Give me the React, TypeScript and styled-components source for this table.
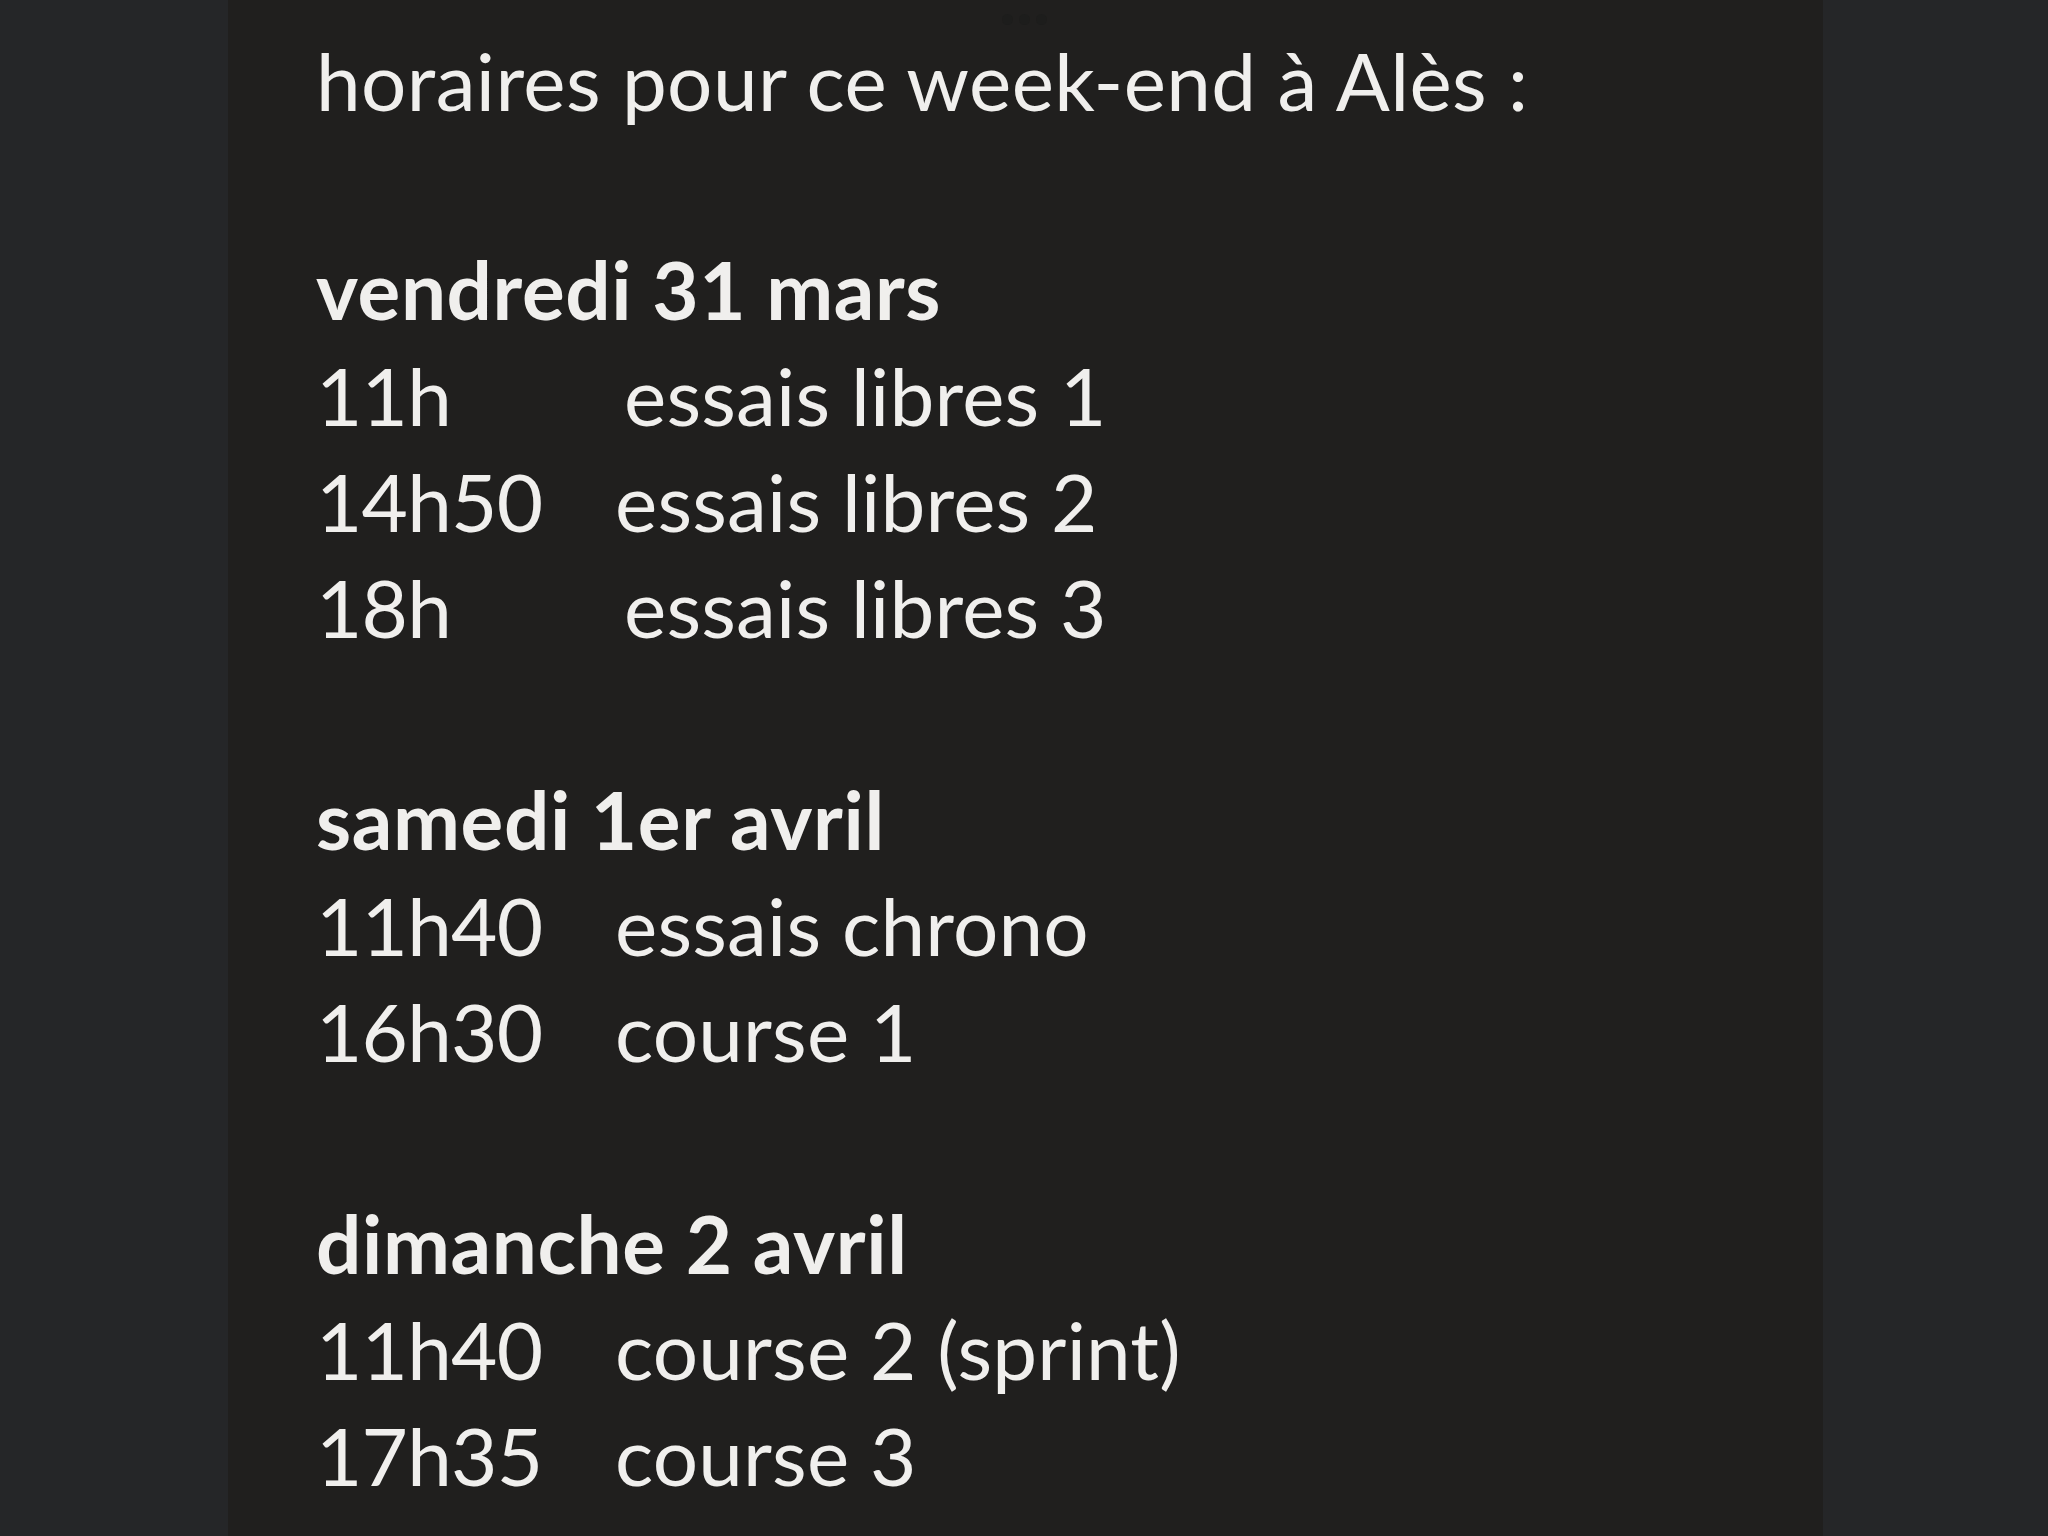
import React from "react";
import styled, { createGlobalStyle } from "styled-components";

const GlobalStyle = createGlobalStyle`
  html, body {
    margin: 0;
    padding: 0;
    background: #252628;
  }
  body {
    font-family: Lato, "Open Sans", "Liberation Sans", sans-serif;
  }
`;

const Page = styled.div`
  min-height: 1536px;
  display: flex;
  background: #252628;
`;

const Panel = styled.main`
  position: relative;
  margin-left: 228px;
  width: 1595px;
  min-height: 1536px;
  box-sizing: border-box;
  background: #201f1e;
  padding: 27px 0 0 88px;
  color: #f0efed;
  font-family: Lato, "Open Sans", "Liberation Sans", sans-serif;
  font-size: 80px;
  line-height: 106px;
  display: flex;
  flex-direction: column;
`;

const MoreDots = styled.div`
  position: absolute;
  top: 14px;
  left: 774px;
  display: flex;
  gap: 6px;
`;

const Dot = styled.span`
  width: 11px;
  height: 11px;
  border-radius: 50%;
  background: #1d1d1c;
`;

const Intro = styled.p`
  margin: 0 0 103px 0;
  font-weight: 400;
  letter-spacing: 0.4px;
`;

const Sections = styled.div`
  display: flex;
  flex-direction: column;
  gap: 106px;
`;

const Section = styled.section`
  display: flex;
  flex-direction: column;
`;

const DayTitle = styled.h2`
  margin: 0;
  font-size: 80px;
  line-height: 106px;
  font-weight: 700;
  letter-spacing: 0.6px;
`;

const Row = styled.div<{ $shift?: number }>`
  display: grid;
  grid-template-columns: ${(p) => 299 + (p.$shift ?? 0)}px auto;
  white-space: nowrap;
`;

const Time = styled.span`
  letter-spacing: -0.8px;
`;
const Activity = styled.span`
  letter-spacing: 0.2px;
`;

type Item = { time: string; label: string; shift?: number };
type Day = { title: string; items: Item[] };

const days: Day[] = [
  {
    title: "vendredi 31 mars",
    items: [
      { time: "11h", label: "essais libres 1", shift: 9 },
      { time: "14h50", label: "essais libres 2" },
      { time: "18h", label: "essais libres 3", shift: 9 },
    ],
  },
  {
    title: "samedi 1er avril",
    items: [
      { time: "11h40", label: "essais chrono" },
      { time: "16h30", label: "course 1" },
    ],
  },
  {
    title: "dimanche 2 avril",
    items: [
      { time: "11h40", label: "course 2 (sprint)" },
      { time: "17h35", label: "course 3" },
    ],
  },
];

export default function App() {
  return (
    <>
      <GlobalStyle />
      <Page>
        <Panel>
          <MoreDots>
            <Dot />
            <Dot />
            <Dot />
          </MoreDots>
          <Intro>horaires pour ce week-end à Alès :</Intro>
          <Sections>
            {days.map((d) => (
              <Section key={d.title}>
                <DayTitle>{d.title}</DayTitle>
                {d.items.map((it) => (
                  <Row key={it.time + it.label} $shift={it.shift}>
                    <Time>{it.time}</Time>
                    <Activity>{it.label}</Activity>
                  </Row>
                ))}
              </Section>
            ))}
          </Sections>
        </Panel>
      </Page>
    </>
  );
}
